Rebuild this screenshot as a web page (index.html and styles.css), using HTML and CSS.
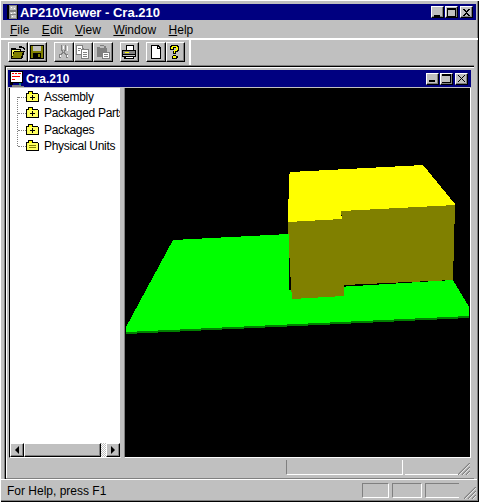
FILE: index.html
```html
<!DOCTYPE html>
<html lang="en">
<head>
    <meta charset="UTF-8">
    <title>AP210Viewer - Cra.210</title>
    <link rel="stylesheet" href="styles.css">
</head>
<body>

<svg class="defs" width="0" height="0">
    <symbol id="folder" viewBox="0 0 13 12">
        <path d="M2 0h5v2h5v1h1v8H0V2h2z" fill="#000"/>
        <path d="M1 3h11v7H1z" fill="#ffff60"/>
        <path d="M3 1h3v2H3z" fill="#ffff00"/>
        <path d="M6 4h1v2h2v1H7v2H6V7H4V6h2z" fill="#000"/>
    </symbol>
    <symbol id="folder-dots" viewBox="0 0 13 12">
        <path d="M2 0h5v2h5v1h1v8H0V2h2z" fill="#000"/>
        <path d="M1 3h11v7H1z" fill="#ffff60"/>
        <path d="M3 1h3v2H3z" fill="#ffff00"/>
        <path d="M3 5h7v1H3zM3 7h7v1H3z" fill="#808000"/>
    </symbol>
</svg>

<div class="app">
    <div class="titlebar">
        <svg class="app-icon" width="11" height="14" viewBox="0 0 11 14" shape-rendering="crispEdges">
            <path d="M0 0h11v14H0z" fill="#000"/>
            <path d="M2 0h8v14H2z" fill="#808080"/>
            <path d="M3 1h6v4H3zM3 7h6v2H3zM4 10h5v3H4z" fill="#c0c0c0"/>
            <path d="M4 2h1v1H4zM7 3h1v1H7zM4 8h1v1H4zM7 7h1v1H7zM5 11h1v1H5z" fill="#fff"/>
        </svg>
        <span class="title-text main-title">AP210Viewer - Cra.210</span>
        <div class="win-btns">
            <div class="win-btn"><svg width="9" height="9" viewBox="0 0 9 9"><path d="M1 7h6v2H1z"/></svg></div>
            <div class="win-btn"><svg width="9" height="9" viewBox="0 0 9 9"><path d="M0 0h9v9H0zM1 2v6h7V2z" fill-rule="evenodd"/></svg></div>
            <div class="win-btn win-close"><svg width="9" height="9" viewBox="0 0 9 9"><path d="M1 1h2v1h1v1h1V2h1V1h2v1H7v1H6v1H5v1h1v1h1v1h1v1H6V7H5V6H4v1H3v1H1V7h1V6h1V5h1V4H3V3H2V2H1z"/></svg></div>
        </div>
    </div>

    <div class="menubar">
        <span><u>F</u>ile</span>
        <span><u>E</u>dit</span>
        <span><u>V</u>iew</span>
        <span><u>W</u>indow</span>
        <span><u>H</u>elp</span>
    </div>

    <div class="toolbar">
        <div class="tools">
            <div class="tool-group">
                <div class="tool">
                    <svg width="16" height="16" viewBox="0 0 16 16" shape-rendering="crispEdges">
                        <path d="M1 4h5v1h5v2h4l-3 8H1z" fill="#000"/>
                        <path d="M2 6h8v1H4v1H3v4H2z" fill="#ffff60"/>
                        <path d="M4 8h9l-2 6H2v-1h1v-3h1z" fill="#808000"/>
                        <path d="M9 2h3v1h2v1h1v2h-1V5h-1V4H9z" fill="#000"/>
                    </svg>
                </div>
                <div class="tool">
                    <svg width="16" height="16" viewBox="0 0 16 16" shape-rendering="crispEdges">
                        <path d="M1 1h14v14H1z" fill="#000"/>
                        <path d="M2 2h12v12H2z" fill="#808000"/>
                        <path d="M4 2h8v5H4z" fill="#c0c0c0"/>
                        <path d="M4 9h8v5H4z" fill="#000"/>
                        <path d="M9 10h2v3H9z" fill="#808000"/>
                    </svg>
                </div>
            </div>
            <div class="tool-group">
                <div class="tool">
                    <svg width="16" height="16" viewBox="0 0 16 16" shape-rendering="crispEdges">
                        <path d="M5 1h1v5h1v2h1V6h1V1h1v6H9v2h1v1h2v4h-2v-3H9v-1H8v-1H7v1H6v1H5v3H3v-4h2V9h1V7H5z" fill="#808080"/>
                        <path d="M7 2h1v3H7zM4 11h1v2H4zM11 11h1v2h-1zM11 2h1v5h-1z" fill="#fff"/>
                    </svg>
                </div>
                <div class="tool">
                    <svg width="16" height="16" viewBox="0 0 16 16" shape-rendering="crispEdges">
                        <path d="M1 1h7v3h1v1h5v10H6v-4H1z" fill="#808080"/>
                        <path d="M2 2h5v3h-1v5H2zM7 6h6v8H7z" fill="#fff"/>
                        <path d="M3 4h3v1H3zM3 6h2v1H3zM8 8h4v1H8zM8 10h4v1H8zM8 12h4v1H8z" fill="#808080"/>
                    </svg>
                </div>
                <div class="tool">
                    <svg width="16" height="16" viewBox="0 0 16 16" shape-rendering="crispEdges">
                        <path d="M5 1h4v1h2v2h1v4h3v7H7v-2H2V3h3z" fill="#808080"/>
                        <path d="M5 2h4v2H5z" fill="#c0c0c0"/>
                        <path d="M8 9h6v5H8z" fill="#fff"/>
                        <path d="M9 10h4v1H9zM9 12h4v1H9z" fill="#808080"/>
                    </svg>
                </div>
            </div>
            <div class="tool-group">
                <div class="tool">
                    <svg width="16" height="16" viewBox="0 0 16 16" shape-rendering="crispEdges">
                        <path d="M5 1h8v5h2v7h-2v2H3v-2H1V6h4z" fill="#000"/>
                        <path d="M6 2h6v4H6z" fill="#fff"/>
                        <path d="M2 7h12v3H2z" fill="#808080"/>
                        <path d="M2 11h12v1H2z" fill="#c0c0c0"/>
                        <path d="M4 8h4v1H4z" fill="#ffff00"/>
                        <path d="M5 13h7v1H5z" fill="#fff"/>
                    </svg>
                </div>
            </div>
            <div class="tool-group">
                <div class="tool">
                    <svg width="16" height="16" viewBox="0 0 16 16" shape-rendering="crispEdges">
                        <path d="M3 1h7l3 3v11H3z" fill="#000"/>
                        <path d="M4 2h5v3h3v9H4z" fill="#fff"/>
                        <path d="M10 3l1 1h-1z" fill="#fff"/>
                    </svg>
                </div>
                <div class="tool">
                    <svg width="16" height="16" viewBox="0 0 16 16" shape-rendering="crispEdges">
                        <path d="M4 1h7v1h1v5h-1v1H9v2H6V7h3V4H7v2H3V2h1zM6 11h3v1h2v2h-1v1H5v-3h1z" fill="#000"/>
                        <path d="M5 2h5v1h1v3h-1v1H8v2H7V6h2V3H6v2H4V3h1zM6 12h3v2H6z" fill="#ffff00"/>
                    </svg>
                </div>
            </div>
        </div>
    </div>

    <div class="workspace">
        <div class="child">
            <div class="titlebar child-title">
                <svg class="doc-icon" width="16" height="16" viewBox="0 0 16 16" shape-rendering="crispEdges">
                    <path d="M1 0h13v12H4v2H1z" fill="#000"/>
                    <path d="M2 1h11v10H2z" fill="#fff"/>
                    <path d="M3 2h2v1H3zM6 2h2v1H6zM9 2h3v1H9zM3 5h8v1H3zM3 8h3v1H3z" fill="#ff0000"/>
                    <path d="M3 14h9v1h3v1H3z" fill="#808080"/>
                    <path d="M10 12h2v2h-2z" fill="#008080"/>
                </svg>
                <span class="title-text">Cra.210</span>
                <div class="win-btns">
                    <div class="win-btn"><svg width="9" height="9" viewBox="0 0 9 9"><path d="M1 6h6v2H1z"/></svg></div>
                    <div class="win-btn"><svg width="9" height="9" viewBox="0 0 9 9"><path d="M0 0h9v9H0V8h8V2H0z"/></svg></div>
                    <div class="win-btn win-close"><svg width="9" height="9" viewBox="0 0 9 9"><path d="M1 1h1v1h1v1h1v1h1V3h1V2h1V1h1v1H7v1H6v1H5v1h1v1h1v1h1v1H7V7H6V6H5V5H4v1H3v1H2v1H1V7h1V6h1V5h1V4H3V3H2V2H1z"/></svg></div>
                </div>
            </div>

            <div class="child-body">
                <div class="tree-pane">
                    <ul class="tree">
                        <li><svg width="13" height="12"><use href="#folder"/></svg><span>Assembly</span></li>
                        <li><svg width="13" height="12"><use href="#folder"/></svg><span>Packaged Parts</span></li>
                        <li><svg width="13" height="12"><use href="#folder"/></svg><span>Packages</span></li>
                        <li><svg width="13" height="12"><use href="#folder-dots"/></svg><span>Physical Units</span></li>
                    </ul>
                    <div class="hscroll">
                        <div class="scroll-btn"><i class="arrow-left"></i></div>
                        <div class="scroll-thumb"></div>
                        <div class="scroll-track"></div>
                        <div class="scroll-btn"><i class="arrow-right"></i></div>
                    </div>
                </div>
                <div class="splitter"></div>
                <div class="viewport">
                    <svg width="345" height="369" viewBox="125 88 345 369" shape-rendering="crispEdges">
                        <polygon points="126,327 173,240 289,234 289,290 453,280 469,307 469,318 126,334" fill="#00ff00"/>
                        <polygon points="126,332 469,316 469,318 126,334" fill="#008000"/>
                        <polygon points="288,222 289,177 290,172 423,165 455,204 455,206 341,212 342,219" fill="#ffff00"/>
                        <polygon points="288,222 342,219 341,211 455,205 453,280 344,285 344,296 292,299 290,270" fill="#808000"/>
                    </svg>
                </div>
            </div>

            <div class="child-status">
                <div class="child-panel panel-wide"></div>
                <div class="child-panel panel-small"></div>
                <svg class="grip" width="12" height="12" viewBox="0 0 12 12">
                    <path d="M0 12L12 0M4 12L12 4M8 12L12 8" stroke="#808080" stroke-width="1.4"/>
                    <path d="M1 12L12 1M5 12L12 5M9 12L12 9" stroke="#fff" stroke-width="0.7"/>
                </svg>
            </div>
        </div>
    </div>

    <div class="statusbar">
        <span class="status-text">For Help, press F1</span>
        <div class="status-panels">
            <div class="status-panel panel-a"></div>
            <div class="status-panel panel-b"></div>
            <div class="status-panel panel-c"></div>
        </div>
        <svg class="grip" width="12" height="12" viewBox="0 0 12 12">
            <path d="M0 12L12 0M4 12L12 4M8 12L12 8" stroke="#808080" stroke-width="1.4"/>
            <path d="M1 12L12 1M5 12L12 5M9 12L12 9" stroke="#fff" stroke-width="0.7"/>
        </svg>
    </div>
</div>

</body>
</html>
```

FILE: styles.css
```css
* {
    margin: 0;
    padding: 0;
    box-sizing: border-box;
}

body {
    background: #c0c0c0;
    font-family: "Liberation Sans", Arial, sans-serif;
    font-size: 12px;
    color: #000;
    overflow: hidden;
}

.defs {
    display: block;
}

.app {
    width: 479px;
    height: 502px;
    padding: 4px 3px 2px 3px;
    display: flex;
    flex-direction: column;
    background: #c0c0c0;
    box-shadow: inset 1px 1px #fff, inset -1px -1px #000, inset -2px -2px #808080;
}

/* title bars */
.titlebar {
    height: 16px;
    flex: none;
    display: flex;
    align-items: center;
    background: #000080;
    color: #fff;
    padding: 0 3px 0 0;
}

.app-icon {
    flex: none;
    margin: 0 2px 0 4px;
}

.title-text {
    font-weight: bold;
    font-size: 12px;
    white-space: nowrap;
}

.main-title {
    font-size: 13px;
}

.win-btns {
    margin-left: auto;
    display: flex;
    gap: 1px;
}

.win-btn {
    width: 13px;
    height: 12px;
    background: #c0c0c0;
    border-top: 1px solid #fff;
    border-left: 1px solid #fff;
    border-right: 1px solid #000;
    border-bottom: 1px solid #000;
    box-shadow: inset -1px -1px #808080;
    display: flex;
    align-items: center;
    justify-content: center;
}

.win-close {
    margin-left: 1px;
}

/* menu */
.menubar {
    height: 20px;
    flex: none;
    display: flex;
    align-items: center;
    gap: 12.5px;
    padding: 1px 0 0 9px;
    margin: 0 -2px 0 -2px;
    border-bottom: 2px solid;
    border-image: linear-gradient(to bottom, #808080 50%, #fff 50%) 2;
}

/* toolbar */
.toolbar {
    height: 25px;
    flex: none;
}

.tools {
    width: 188px;
    height: 25px;
    padding: 2px 0 0 5px;
    display: flex;
    gap: 7px;
    border-right: 2px solid;
    border-image: linear-gradient(to right, #808080 50%, #fff 50%) 2;
}

.tool-group {
    display: flex;
}

.tool {
    width: 19.5px;
    height: 20px;
    border-top: 1px solid #fff;
    border-left: 1px solid #fff;
    border-right: 1px solid #000;
    border-bottom: 1px solid #000;
    box-shadow: inset -1px -1px #808080;
    display: flex;
    align-items: center;
    justify-content: center;
}

/* mdi area */
.workspace {
    flex: 1;
    min-height: 0;
    margin: 0 2px 0 1px;
    padding: 2px 0 0 2px;
    background: #c0c0c0;
    box-shadow: inset 1px 1px #808080, inset 2px 2px #000;
    display: flex;
}

.child {
    flex: 1;
    min-width: 0;
    padding: 3px 3px 0 2px;
    display: flex;
    flex-direction: column;
    box-shadow: inset 1px 1px #fff, 0 1px #808080;
    margin-bottom: 1px;
}

.child-title {
    height: 17px;
    margin-bottom: 1px;
}

.doc-icon {
    flex: none;
    margin: 0 1px 0 1px;
}

.child-body {
    flex: 1;
    min-height: 0;
    display: flex;
}

.tree-pane {
    width: 112px;
    margin-left: 1px;
    flex: none;
    display: flex;
    flex-direction: column;
    background: #fff;
    border-left: 1px solid #000;
    border-right: 1px solid #c0c0c0;
    border-bottom: 1px solid #fff;
}

.tree {
    flex: 1;
    list-style: none;
    position: relative;
    overflow: hidden;
    padding-top: 1px;
    letter-spacing: -0.3px;
}

.tree::before {
    content: "";
    position: absolute;
    left: 7px;
    top: 9px;
    height: 49px;
    border-left: 1px dotted #808080;
}

.tree li {
    height: 16.33px;
    display: flex;
    align-items: center;
    gap: 5px;
    padding-left: 16px;
    white-space: nowrap;
    position: relative;
}

.tree li::before {
    content: "";
    position: absolute;
    left: 8px;
    top: 8px;
    width: 8px;
    border-top: 1px dotted #808080;
}

.tree svg {
    flex: none;
}

.hscroll {
    height: 14px;
    flex: none;
    display: flex;
}

.scroll-btn {
    width: 14px;
    flex: none;
    background: #c0c0c0;
    border-top: 1px solid #fff;
    border-left: 1px solid #fff;
    border-right: 1px solid #000;
    border-bottom: 1px solid #000;
    box-shadow: inset -1px -1px #808080;
    display: flex;
    align-items: center;
    justify-content: center;
}

.scroll-thumb {
    width: 77px;
    flex: none;
    background: #c0c0c0;
    border-top: 1px solid #fff;
    border-left: 1px solid #fff;
    border-right: 1px solid #000;
    border-bottom: 1px solid #000;
    box-shadow: inset -1px -1px #808080;
}

.scroll-track {
    flex: 1;
    background: repeating-conic-gradient(#fff 0 25%, #c0c0c0 0 50%) 0 0 / 2px 2px;
}

.arrow-left,
.arrow-right {
    width: 0;
    height: 0;
    border-top: 4px solid transparent;
    border-bottom: 4px solid transparent;
}

.arrow-left {
    border-right: 4px solid #000;
}

.arrow-right {
    border-left: 4px solid #000;
}

.splitter {
    width: 3px;
    flex: none;
}

.viewport {
    flex: 1;
    min-width: 0;
    background: #000;
    border-left: 1px solid #808080;
    border-right: 1px solid #fff;
    border-bottom: 1px solid #fff;
}

.viewport svg {
    display: block;
}

/* status bars */
.child-status {
    height: 20px;
    flex: none;
    display: flex;
    align-items: flex-start;
    justify-content: flex-end;
    padding-top: 2px;
    position: relative;
}

.child-panel {
    height: 15px;
    border-bottom: 1px solid #fff;
}

.panel-wide {
    width: 117px;
    border-left: 1px solid #808080;
    border-right: 1px solid #fff;
}

.panel-small {
    width: 53px;
    margin: 0 13px 0 2px;
}

.child-status .grip {
    position: absolute;
    right: 1px;
    bottom: 3px;
}

.statusbar {
    height: 21px;
    flex: none;
    margin: 0 -1px 0 -2px;
    display: flex;
    align-items: flex-start;
    padding: 3px 1px 0 6px;
    border-top: 1px solid #fff;
    position: relative;
}

.status-text {
    line-height: 16px;
    white-space: nowrap;
}

.status-panels {
    margin-left: auto;
    margin-right: 17px;
    display: flex;
    gap: 3px;
}

.status-panel {
    height: 15px;
    border-top: 1px solid #808080;
    border-left: 1px solid #808080;
    border-bottom: 1px solid #fff;
    border-right: 1px solid #fff;
}

.panel-a {
    width: 27px;
}

.panel-b {
    width: 30px;
}

.panel-c {
    width: 34px;
    border-right: 0;
}

.statusbar .grip {
    position: absolute;
    right: 1px;
    bottom: 1px;
}
```
